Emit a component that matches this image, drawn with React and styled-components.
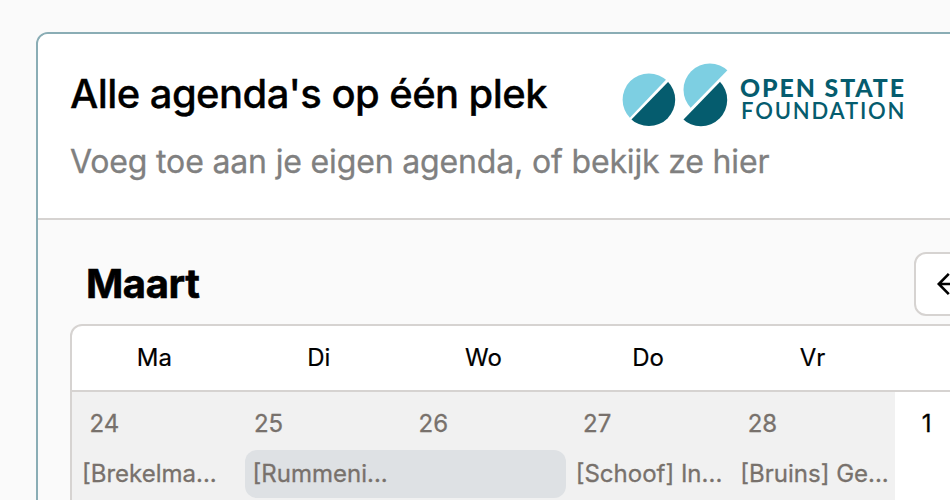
import React from 'react'
import styled, { createGlobalStyle } from 'styled-components'

const GlobalStyle = createGlobalStyle`
  * {
    box-sizing: border-box;
  }
  body {
    margin: 0;
    height: 500px;
    overflow: hidden;
    background-color: #fafafa;
    color: #000;
    font-family: Inter, 'Liberation Sans', sans-serif;
  }
`
const Page = styled.main`
  height: 500px;
  padding: 32px 0 0 36px;
  overflow: hidden;
`
const Card = styled.section`
  width: 1224px;
  height: 900px;
  border: 2px solid #8aadb5;
  border-radius: 12px;
  overflow: hidden;
`
const Header = styled.header`
  display: flex;
  height: 186px;
  padding: 28px 32px 0;
  background-color: #fff;
  border-bottom: 2px solid #d6d3d1;
`
const Titles = styled.div`
  width: 552px;
  white-space: nowrap;
`
const Title = styled.h1`
  margin: 0;
  font-size: 40px;
  font-weight: 500;
  line-height: 64px;
  letter-spacing: -0.58px;
  -webkit-text-stroke: 0.3px #000;
`
const Subtitle = styled.p`
  margin: 8px 0 0;
  color: #808080;
  font-size: 32px;
  line-height: 56px;
  letter-spacing: -0.16px;
  -webkit-text-stroke: 0.3px #808080;
`
const Logo = styled.svg`
  width: 284px;
  height: 66px;
  flex-shrink: 0;
`
const LogoName = styled.text`
  fill: #055c6e;
  font-family: Lato, sans-serif;
  font-size: ${(props) => props.$size};
  font-weight: ${(props) => props.$weight};
`
const Content = styled.div`
  padding: 32px 32px 0;
`
const Toolbar = styled.div`
  display: flex;
  justify-content: space-between;
  height: 72px;
  padding-left: 16px;
`
const Month = styled.h2`
  margin: 0;
  font-size: 40px;
  font-weight: 700;
  line-height: 64px;
  letter-spacing: -0.4px;
  -webkit-text-stroke: 0.6px #000;
`
const PrevButton = styled.button`
  display: flex;
  align-items: center;
  width: 312px;
  height: 64px;
  padding: 0 0 0 18px;
  border: 2px solid #d6d3d1;
  border-radius: 12px;
  background-color: #fff;
`
const Calendar = styled.div`
  width: 1156px;
  height: 640px;
  border: 2px solid #d6d3d1;
  border-radius: 12px;
  background-color: #fff;
  overflow: hidden;
`
const WeekDays = styled.div`
  display: grid;
  grid-template-columns: repeat(7, 1fr);
  height: 66px;
  border-bottom: 2px solid #d6d3d1;
  font-size: 24px;
  line-height: 64px;
  text-align: center;
  -webkit-text-stroke: 0.2px #000;
`
const Week = styled.div`
  display: grid;
  grid-template-columns: repeat(7, 1fr);
  grid-template-rows: 58px 48px 200px;
`
const Day = styled.div`
  grid-column: ${(props) => props.$column};
  grid-row: 1 / -1;
  padding: 16px 0 0 ${(props) => (props.$muted ? '17.4px' : '27px')};
  background-color: ${(props) => (props.$muted ? '#f1f1f1' : '#fff')};
  color: ${(props) => (props.$muted ? '#78716c' : '#000')};
  font-size: 24px;
  line-height: 32px;
  -webkit-text-stroke: 0.3px currentColor;
`
const Event = styled.div`
  grid-column: ${(props) => props.$column} / span ${(props) => props.$span || 1};
  grid-row: 2;
  margin-left: ${(props) => (props.$filled ? '8px' : '2px')};
  padding-left: 8px;
  border-radius: 12px;
  background-color: ${(props) => (props.$filled ? '#dee1e4' : 'transparent')};
  color: #78716c;
  font-size: 24px;
  line-height: 48px;
  white-space: nowrap;
  -webkit-text-stroke: 0.3px currentColor;
`

const weekDays = ['Ma', 'Di', 'Wo', 'Do', 'Vr', 'Za', 'Zo']
const days = [
  { day: 24, muted: true },
  { day: 25, muted: true },
  { day: 26, muted: true },
  { day: 27, muted: true },
  { day: 28, muted: true },
  { day: 1 },
  { day: 2 },
]
const events = [
  { name: '[Brekelma...', column: 1 },
  { name: '[Rummeni...', column: 2, span: 2, filled: true },
  { name: '[Schoof] In...', column: 4 },
  { name: '[Bruins] Ge...', column: 5 },
]

// every half is a circle cut along a diagonal
const logoHalves = [
  { id: 'o-top', cx: 648.9, cy: 99.7, fill: '#7dcfe2', cut: '619.5,128.5 676.2,69 600,50' },
  { id: 'o-bottom', cx: 648.9, cy: 99.8, fill: '#055c6e', cut: '621,130.2 678.5,71.2 700,150' },
  { id: 's-top', cx: 709.8, cy: 89.8, fill: '#7dcfe2', cut: '680.2,118.5 737,60.5 660,40' },
  { id: 's-bottom', cx: 700.9, cy: 99.9, fill: '#055c6e', cut: '673.5,129.8 730.5,71 750,150' },
]

const OpenStateLogo = () => (
  <Logo viewBox="622 62 284 66">
    {logoHalves.map(({ id, cx, cy, fill, cut }) => (
      <g key={id}>
        <clipPath id={id}>
          <polygon points={cut} />
        </clipPath>
        <circle cx={cx} cy={cy} r="26.3" fill={fill} clipPath={`url(#${id})`} />
      </g>
    ))}
    <LogoName x="740" y="96.7" $size="24.8px" $weight="900" textLength="164">
      OPEN STATE
    </LogoName>
    <LogoName x="741" y="119" $size="22px" $weight="600" textLength="163.5">
      FOUNDATION
    </LogoName>
  </Logo>
)

const App = () => (
  <Page>
    <GlobalStyle />
    <Card>
      <Header>
        <Titles>
          <Title>Alle agenda's op één plek</Title>
          <Subtitle>Voeg toe aan je eigen agenda, of bekijk ze hier</Subtitle>
        </Titles>
        <OpenStateLogo />
      </Header>
      <Content>
        <Toolbar>
          <Month>Maart</Month>
          <PrevButton aria-label="Vorige maand">
            <svg width="32" height="32" viewBox="0 0 32 32" fill="none" stroke="#000" strokeWidth="2.6">
              <path d="M14.8 5.8L4.8 16L14.8 26.2M4.8 16H28" />
            </svg>
          </PrevButton>
        </Toolbar>
        <Calendar>
          <WeekDays>
            {weekDays.map((name) => (
              <div key={name}>{name}</div>
            ))}
          </WeekDays>
          <Week>
            {days.map(({ day, muted }, index) => (
              <Day key={day} $column={index + 1} $muted={muted}>
                {day}
              </Day>
            ))}
            {events.map(({ name, column, span, filled }) => (
              <Event key={name} $column={column} $span={span} $filled={filled}>
                {name}
              </Event>
            ))}
          </Week>
        </Calendar>
      </Content>
    </Card>
  </Page>
)

export default App
